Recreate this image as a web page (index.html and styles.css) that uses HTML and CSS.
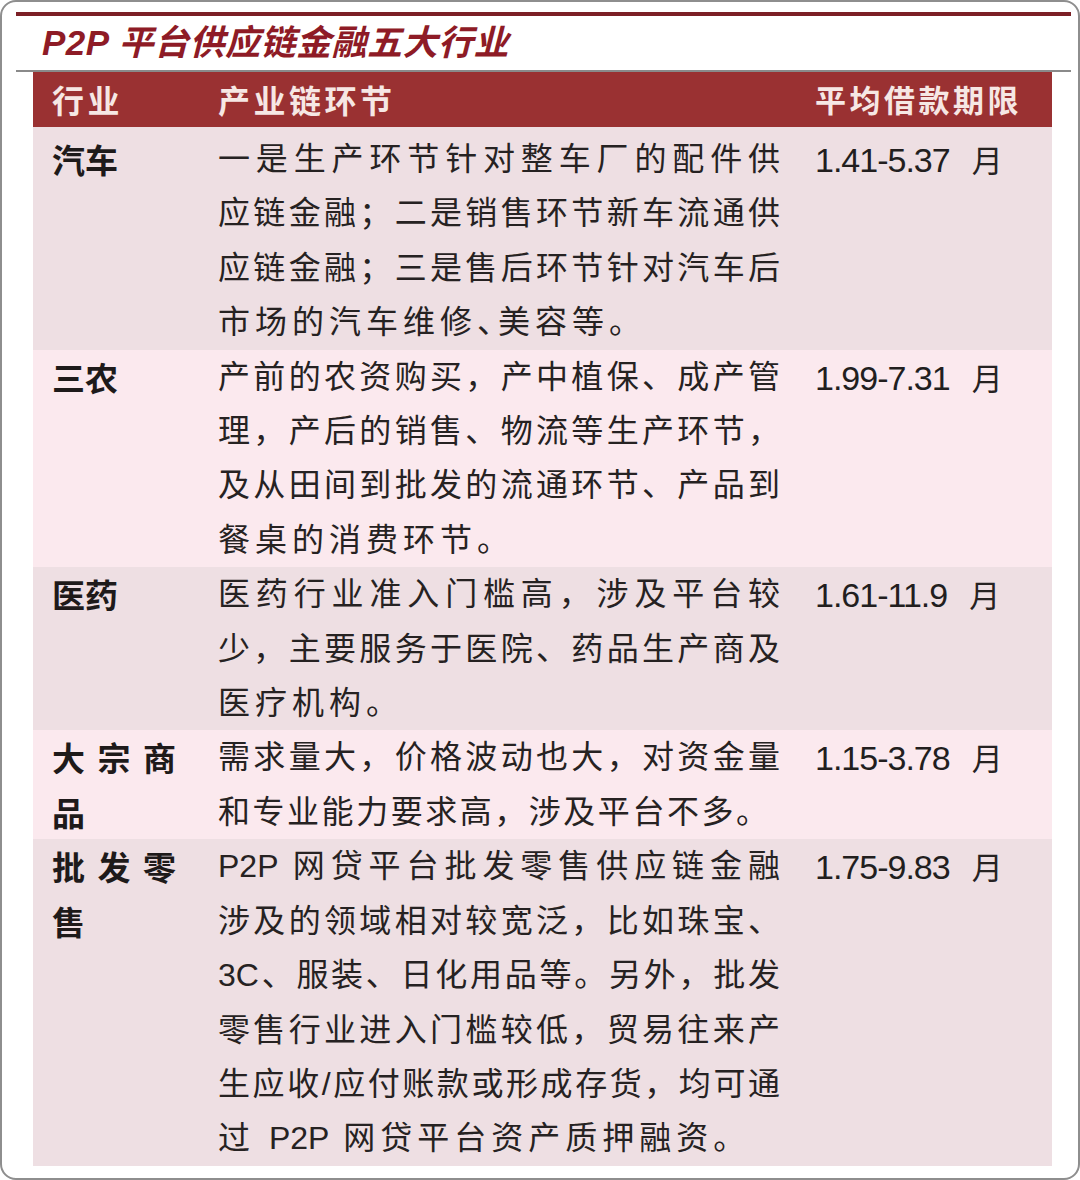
FILE: index.html
```html
<!DOCTYPE html>
<html lang="zh-CN">
<head>
<meta charset="utf-8">
<title>P2P 平台供应链金融五大行业</title>
<link rel="stylesheet" href="styles.css">
</head>
<body>
<div class="frame">
  <div class="rule-top"></div>
  <div class="title">P2P 平台供应链金融五大行业</div>
  <div class="rule-gray"></div>
  <div class="table">
    <div class="row head">
      <div class="c1">行业</div>
      <div class="c2">产业链环节</div>
      <div class="c3">平均借款期限</div>
    </div>
    <div class="row dark first">
      <div class="c1 ind">汽车</div>
      <div class="c2">
        <div class="ln">一是生产环节针对整车厂的配件供</div>
        <div class="ln">应链金融；二是销售环节新车流通供</div>
        <div class="ln">应链金融；三是售后环节针对汽车后</div>
        <div class="ln end">市场的汽车维修、美容等。</div>
      </div>
      <div class="c3"><span class="num">1.41-5.37</span>月</div>
    </div>
    <div class="row light">
      <div class="c1 ind">三农</div>
      <div class="c2">
        <div class="ln">产前的农资购买，产中植保、成产管</div>
        <div class="ln">理，产后的销售、物流等生产环节，</div>
        <div class="ln">及从田间到批发的流通环节、产品到</div>
        <div class="ln end">餐桌的消费环节。</div>
      </div>
      <div class="c3"><span class="num">1.99-7.31</span>月</div>
    </div>
    <div class="row dark">
      <div class="c1 ind">医药</div>
      <div class="c2">
        <div class="ln">医药行业准入门槛高，涉及平台较</div>
        <div class="ln">少，主要服务于医院、药品生产商及</div>
        <div class="ln end">医疗机构。</div>
      </div>
      <div class="c3"><span class="num">1.61-11.9</span>月</div>
    </div>
    <div class="row light">
      <div class="c1 ind">大宗商品</div>
      <div class="c2">
        <div class="ln">需求量大，价格波动也大，对资金量</div>
        <div class="ln short">和专业能力要求高，涉及平台不多。</div>
      </div>
      <div class="c3"><span class="num">1.15-3.78</span>月</div>
    </div>
    <div class="row dark">
      <div class="c1 ind">批发零售</div>
      <div class="c2">
        <div class="ln">P2P 网贷平台批发零售供应链金融</div>
        <div class="ln">涉及的领域相对较宽泛，比如珠宝、</div>
        <div class="ln">3C、服装、日化用品等。另外，批发</div>
        <div class="ln">零售行业进入门槛较低，贸易往来产</div>
        <div class="ln">生应收/应付账款或形成存货，均可通</div>
        <div class="ln end">过 <span class="latin">P2P</span> 网贷平台资产质押融资。</div>
      </div>
      <div class="c3"><span class="num">1.75-9.83</span>月</div>
    </div>
  </div>
</div>
</body>
</html>
```

FILE: styles.css
```css
html, body {
  margin: 0;
  padding: 0;
  background: #ffffff;
}

body {
  font-family: "Liberation Sans", "Noto Sans CJK SC", sans-serif;
  color: #262222;
}

.frame {
  box-sizing: border-box;
  width: 1080px;
  height: 1180px;
  border: 2px solid #8e8e8e;
  border-radius: 16px;
  padding: 10px 7px 0 14px;
  background: #ffffff;
  overflow: hidden;
}

.rule-top {
  height: 4px;
  background: #7c2026;
}

.title {
  height: 54px;
  box-sizing: border-box;
  padding-left: 26px;
  font-family: "Liberation Sans", "Noto Sans CJK SC", sans-serif;
  font-style: italic;
  font-weight: 700;
  font-size: 35px;
  line-height: 54px;
  color: #8e1b26;
  letter-spacing: 0.5px;
}

.rule-gray {
  height: 2px;
  background: #8a8a8a;
}

.table {
  margin-left: 17px;
  width: 1019px;
}

.row {
  display: grid;
  grid-template-columns: 185px 597px 237px;
}

.head {
  height: 55px;
  background: #9a3132;
  color: #f6e7e4;
  font-family: "Noto Sans CJK SC", sans-serif;
  font-weight: 700;
  font-size: 32px;
  line-height: 55px;
  letter-spacing: 3.5px;
}

.dark {
  background: #eedfe3;
}

.light {
  background: #fbe9ee;
}

.first {
  padding-top: 5px;
}

.c1, .c2, .c3 {
  box-sizing: border-box;
}

.c1 {
  padding-left: 19px;
  padding-right: 7px;
}

.c2 {
  padding-right: 35px;
}

.ind {
  font-family: "Noto Sans CJK SC", sans-serif;
  font-weight: 700;
  font-size: 33px;
  line-height: 54.4px;
  text-align: justify;
  color: #1e1a1a;
  width: 185px;
  padding-right: 42px;
}

.ln {
  font-size: 32px;
  line-height: 54.4px;
  text-align: justify;
  text-align-last: justify;
  white-space: nowrap;
}

.ln.short {
  padding-right: 12px;
}

.ln.end {
  text-align: left;
  text-align-last: left;
  letter-spacing: 5px;
  font-feature-settings: "halt";
}

.latin {
  letter-spacing: 0;
}

.c3 {
  font-family: "Noto Sans CJK SC", sans-serif;
  font-size: 31px;
  line-height: 54.4px;
}

.num {
  font-family: "Liberation Sans", sans-serif;
  font-size: 34px;
  letter-spacing: -1px;
  color: #221e1e;
  margin-right: 22px;
}
```
